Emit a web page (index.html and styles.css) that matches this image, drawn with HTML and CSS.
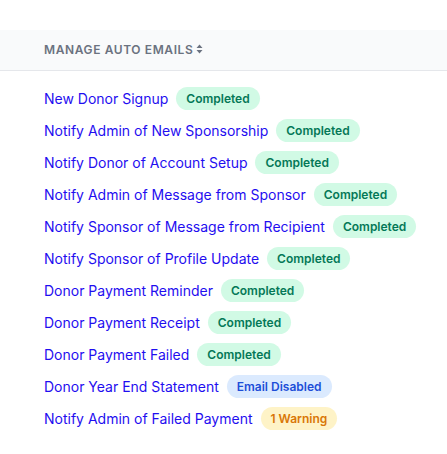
FILE: index.html
```html
<!DOCTYPE html>
<html>
<head>
<meta charset="utf-8">
<link rel="stylesheet" href="styles.css">
</head>
<body>
<div class="table">
  <div class="thead">
    <span class="th">Manage Auto Emails</span>
    <svg class="sort" width="7" height="10" viewBox="0 0 7 10"><path d="M3.5 0.5 L6.5 4 L0.5 4 Z M3.5 9.5 L6.5 6 L0.5 6 Z" fill="#6b7280"/></svg>
  </div>
  <div class="tbody">
    <div class="row"><a class="link" href="#">New Donor Signup</a><span class="badge green">Completed</span></div>
    <div class="row"><a class="link" href="#">Notify Admin of New Sponsorship</a><span class="badge green">Completed</span></div>
    <div class="row"><a class="link" href="#">Notify Donor of Account Setup</a><span class="badge green">Completed</span></div>
    <div class="row"><a class="link" href="#">Notify Admin of Message from Sponsor</a><span class="badge green">Completed</span></div>
    <div class="row"><a class="link" href="#">Notify Sponsor of Message from Recipient</a><span class="badge green">Completed</span></div>
    <div class="row"><a class="link" href="#">Notify Sponsor of Profile Update</a><span class="badge green">Completed</span></div>
    <div class="row"><a class="link" href="#">Donor Payment Reminder</a><span class="badge green">Completed</span></div>
    <div class="row"><a class="link" href="#">Donor Payment Receipt</a><span class="badge green">Completed</span></div>
    <div class="row"><a class="link" href="#">Donor Payment Failed</a><span class="badge green">Completed</span></div>
    <div class="row"><a class="link" href="#">Donor Year End Statement</a><span class="badge blue">Email Disabled</span></div>
    <div class="row"><a class="link" href="#">Notify Admin of Failed Payment</a><span class="badge yellow">1 Warning</span></div>
  </div>
</div>
</body>
</html>
```
FILE: styles.css
```css
* { box-sizing: border-box; }
body {
  margin: 0;
  background: #fff;
  font-family: Inter, "Noto Sans", sans-serif;
}
.table {
  padding-top: 30px;
}
.thead {
  display: flex;
  align-items: center;
  gap: 3px;
  height: 41px;
  padding: 0 0 1px 44px;
  background: #f9fafb;
  border-bottom: 1px solid #e5e7eb;
}
.th {
  font-size: 12px;
  font-weight: 600;
  text-transform: uppercase;
  letter-spacing: 0.05em;
  color: #6b7280;
}
.sort { margin-top: -2px; }
.tbody {
  padding: 11px 0 0 44px;
}
.row {
  display: flex;
  align-items: center;
  gap: 8px;
  height: 32px;
}
.link {
  font-size: 14px;
  color: #1f0ef0;
  text-decoration: none;
}
.badge {
  display: inline-flex;
  align-items: center;
  height: 23px;
  padding: 0 10px;
  border-radius: 9999px;
  font-size: 12px;
  font-weight: 600;
}
.green { background: #d1fae5; color: #047857; }
.blue { background: #dbeafe; color: #1d4ed8; }
.yellow { background: #fef3c7; color: #d97706; }
```
